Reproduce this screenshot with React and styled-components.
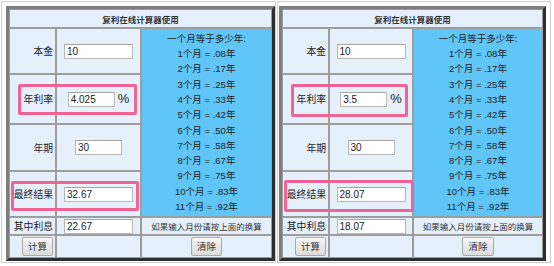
import React from 'react';
import styled, { createGlobalStyle } from 'styled-components';

const GlobalStyle = createGlobalStyle`
    body {
        margin: 0;
        background: #ffffff;
        font-family: "Liberation Sans", "Noto Sans CJK SC", sans-serif;
        color: #222;
    }
`;

const Page = styled.div`
    display: flex;
    align-items: flex-start;
    padding-top: 1px;
    width: 554px;
    height: 266px;
    box-sizing: border-box;
`;

// the screenshot frame around each calculator
const Panel = styled.div`
    position: relative;
    margin-left: 1px;
    border: 1px solid #cfcfcf;
    padding: ${p => p.pad};
    background: #fff;
`;

const Table = styled.div`
    display: grid;
    grid-template-columns: ${p => p.cols};
    grid-template-rows: 19px 46px 50px 47px 46px 18px 23px;
    border-style: solid;
    border-width: 3px;
    border-color: #7d7d7d #2e2e2e #2e2e2e #7d7d7d;
`;

const Cell = styled.div`
    box-sizing: border-box;
    border: 1px solid #9d9d9d;
    background: #e6f0fb;
    display: flex;
    align-items: center;
    justify-content: ${p => p.align || 'center'};
    padding: 0 2px;
    font-size: 9.8px;
    color: #1e1e1e;
    white-space: nowrap;
`;

const Title = styled(Cell)`
    grid-column: 1 / span 3;
    font-weight: bold;
    font-size: 8.5px;
    color: #333;
`;

const BlueCell = styled(Cell)`
    grid-column: 3;
    grid-row: 2 / span 4;
    background: #60c5f7;
    flex-direction: column;
    justify-content: center;
`;

const Line = styled.div`
    line-height: 15.3px;
    font-size: 9.5px;
    color: #222;
`;

const Note = styled(Cell)`
    font-size: 8.5px;
    color: #333;
`;

const Field = styled.input`
    box-sizing: border-box;
    width: ${p => p.w}px;
    height: 15px;
    border: 1px solid #b9b9b9;
    border-top-color: #a5a5a5;
    background: #fff;
    font-family: "Liberation Sans", sans-serif;
    font-size: 10px;
    color: #222;
    padding: 0 2px;
    margin: 0;
    outline: none;
`;

const Percent = styled.span`
    font-size: 13px;
    margin-left: 3px;
    margin-top: -2px;
    color: #222;
`;

const Button = styled.button`
    height: 19px;
    padding: 0 5px;
    border: 1px solid #aaaaaa;
    border-radius: 2px;
    background: linear-gradient(#f7f7f7, #dcdcdc);
    font-family: "Noto Sans CJK SC", sans-serif;
    font-size: 9.5px;
    color: #333;
    line-height: 1;
`;

const Highlight = styled.div`
    position: absolute;
    box-sizing: border-box;
    left: ${p => p.x}px;
    top: ${p => p.y}px;
    width: ${p => p.w}px;
    height: ${p => p.h}px;
    border: 3px solid #ef6494;
    border-radius: 2px;
    pointer-events: none;
`;

const months = ['.08', '.17', '.25', '.33', '.42', '.50', '.58', '.67', '.75', '.83', '.92'];

const Calculator = ({ cols, pad, values, marks }) => (
    <Panel pad={pad}>
        <Table cols={cols}>
            <Title>复利在线计算器使用</Title>

            <Cell align="flex-end">本金</Cell>
            <Cell><Field w={69} defaultValue={values.principal} /></Cell>
            <BlueCell>
                <Line>一个月等于多少年:</Line>
                {months.map((m, i) => (
                    <Line key={m}>{i + 1}个月 = {m}年</Line>
                ))}
            </BlueCell>

            <Cell align="flex-end">年利率</Cell>
            <Cell><Field w={47} defaultValue={values.rate} /><Percent>%</Percent></Cell>

            <Cell align="flex-end">年期</Cell>
            <Cell><Field w={47} defaultValue={values.years} /></Cell>

            <Cell align="flex-end">最终结果</Cell>
            <Cell><Field w={69} defaultValue={values.result} /></Cell>

            <Cell align="flex-end">其中利息</Cell>
            <Cell><Field w={69} defaultValue={values.interest} /></Cell>
            <Note>如果输入月份请按上面的换算</Note>

            <Cell align="flex-end"><Button>计算</Button></Cell>
            <Cell />
            <Cell><Button>清除</Button></Cell>
        </Table>
        {marks.map((m, i) => (
            <Highlight key={i} {...m} />
        ))}
    </Panel>
);

export default function App() {
    return (
        <>
            <GlobalStyle />
            <Page>
                <Calculator
                    cols="47px 85px 131px"
                    pad="4px 0 1px 4px"
                    values={{ principal: '10', rate: '4.025', years: '30', result: '32.67', interest: '22.67' }}
                    marks={[
                        { x: 16, y: 82, w: 119, h: 31 },
                        { x: 9, y: 179, w: 128, h: 30 },
                    ]}
                />
                <Calculator
                    cols="47px 84px 130px"
                    pad="4px 4px 1px 1px"
                    values={{ principal: '10', rate: '3.5', years: '30', result: '28.07', interest: '18.07' }}
                    marks={[
                        { x: 13, y: 82, w: 117, h: 33 },
                        { x: 6, y: 178, w: 130, h: 32 },
                    ]}
                />
            </Page>
        </>
    );
}
